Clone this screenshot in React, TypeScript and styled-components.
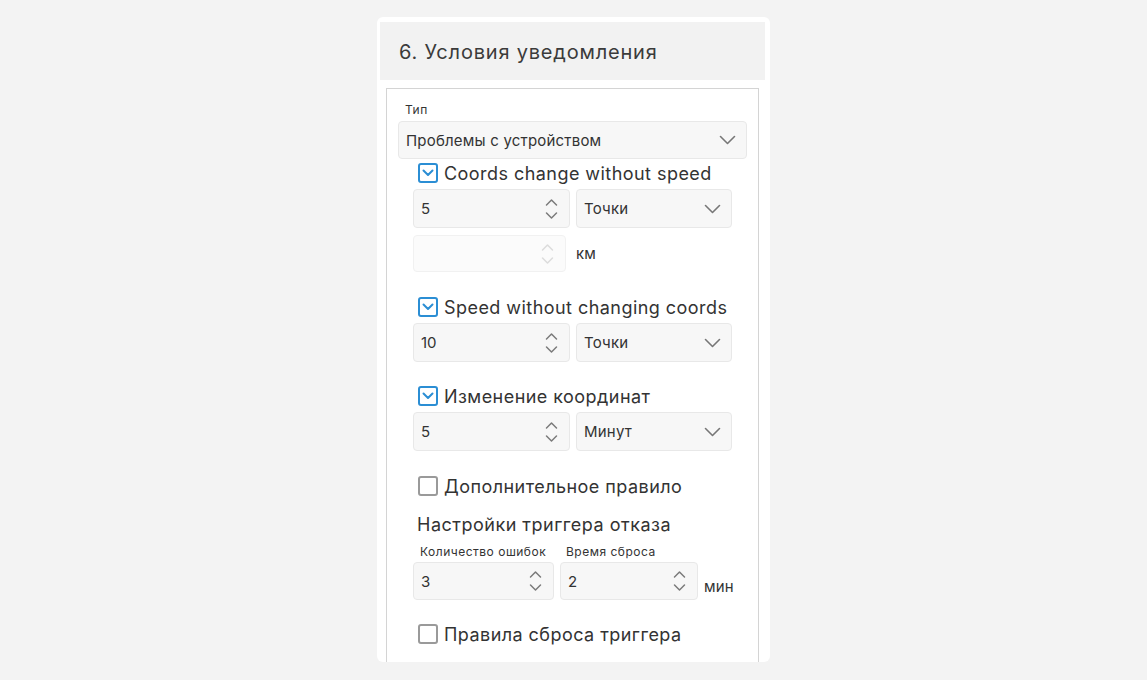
import React from "react";
import styled, { createGlobalStyle } from "styled-components";

const Global = createGlobalStyle`
  html, body { margin: 0; padding: 0; background: #f3f3f3; }
  body { font-family: Inter, "Noto Sans", sans-serif; color: #333; }
  * { box-sizing: border-box; }
`;

const Page = styled.div`
  width: 1147px;
  height: 680px;
  display: flex;
  justify-content: center;
  padding-top: 17px;
`;

const Card = styled.div`
  width: 393px;
  height: 645px;
  background: #fff;
  border-radius: 6px;
  overflow: hidden;
  padding: 5px 5px 0 3px;
`;

const Header = styled.div`
  height: 58px;
  background: #f2f2f2;
  display: flex;
  align-items: center;
  padding-left: 19px;
  padding-top: 2px;
  font-size: 20px;
  color: #3b3b3b;
  letter-spacing: 0.8px;
`;

const Box = styled.div`
  margin: 8px 6px 0 6px;
  border: 1px solid #d4d4d4;
  border-bottom: none;
  padding: 12px 11px 40px 11px;
  height: 600px;
`;

const SmallLabel = styled.div<{ $indent?: number; $w?: number }>`
  font-size: 12px;
  line-height: 18px;
  color: #333;
  letter-spacing: 0.5px;
  padding-left: ${(p) => p.$indent ?? 0}px;
  width: ${(p) => (p.$w ? `${p.$w}px` : "auto")};
`;

const SelectBox = styled.div<{ $w?: number }>`
  height: ${(p) => (p.$w ? 39 : 38)}px;
  width: ${(p) => (p.$w ? `${p.$w}px` : "100%")};
  background: #f7f7f7;
  border: 1px solid #e8e8e8;
  border-radius: 4px;
  display: flex;
  align-items: center;
  justify-content: space-between;
  padding: 0 10px 0 7px;
  font-size: 15px;
  letter-spacing: 0.2px;
  color: #333;
`;

const Group = styled.div<{ $mb?: number }>`
  padding-left: 15px;
  margin-bottom: ${(p) => p.$mb ?? 22}px;
`;

const CheckRow = styled.div`
  display: flex;
  align-items: center;
  height: 24px;
  padding-left: 5px;
  gap: 6px;
  font-size: 18px;
  color: #333;
  letter-spacing: 0.45px;
`;

const Box20 = styled.span<{ $on?: boolean }>`
  width: 20px;
  height: 20px;
  border: 2px solid ${(p) => (p.$on ? "#2b8ed4" : "#9a9a9a")};
  border-radius: 3px;
  display: flex;
  align-items: center;
  justify-content: center;
  flex-shrink: 0;
`;

const Row = styled.div<{ $gap?: number; $mt?: number }>`
  display: flex;
  align-items: center;
  gap: ${(p) => p.$gap ?? 6}px;
  margin-top: ${(p) => p.$mt ?? 0}px;
`;

const NumInput = styled.div<{ $w: number; $disabled?: boolean; $h?: number }>`
  width: ${(p) => p.$w}px;
  height: ${(p) => p.$h ?? 39}px;
  background: ${(p) => (p.$disabled ? "#fbfbfb" : "#f7f7f7")};
  border: 1px solid ${(p) => (p.$disabled ? "#f1f1f1" : "#e8e8e8")};
  border-radius: 4px;
  display: flex;
  align-items: center;
  justify-content: space-between;
  padding: 0 11px 0 7px;
  font-size: 15px;
  color: #333;
`;

const Unit = styled.span<{ $mt?: number }>`
  font-size: 15px;
  letter-spacing: 0.2px;
  color: #333;
  margin-top: ${(p) => p.$mt ?? 0}px;
`;

const Heading = styled.div`
  font-size: 18px;
  line-height: 22px;
  color: #333;
  padding-left: 19px;
  letter-spacing: 0.5px;
`;

const LabelRow = styled.div`
  display: flex;
  margin-top: 7px;
  padding-left: 22px;
  height: 18px;
  align-items: center;
`;

const Chevron = () => (
  <svg width="17" height="10" viewBox="0 0 17 10" fill="none">
    <path d="M1.5 1.5 L8.5 8.5 L15.5 1.5" stroke="#777" strokeWidth="1.6" strokeLinecap="round" strokeLinejoin="round" />
  </svg>
);

const Spinner = ({ light }: { light?: boolean }) => (
  <svg width="13" height="22" viewBox="0 0 13 22" fill="none">
    <path d="M1.5 7 L6.5 2 L11.5 7" stroke={light ? "#dcdcdc" : "#7a7a7a"} strokeWidth="1.5" strokeLinecap="round" strokeLinejoin="round" />
    <path d="M1.5 15 L6.5 20 L11.5 15" stroke={light ? "#dcdcdc" : "#7a7a7a"} strokeWidth="1.5" strokeLinecap="round" strokeLinejoin="round" />
  </svg>
);

const Check = ({ on, label }: { on?: boolean; label: string }) => (
  <CheckRow>
    <Box20 $on={on}>
      {on && (
        <svg width="12" height="8" viewBox="0 0 12 8" fill="none">
          <path d="M1.5 1.5 L6 6 L10.5 1.5" stroke="#2b8ed4" strokeWidth="2" strokeLinecap="round" strokeLinejoin="round" />
        </svg>
      )}
    </Box20>
    <span>{label}</span>
  </CheckRow>
);

const Num = ({ w, v, disabled, h }: { w: number; v?: string; disabled?: boolean; h?: number }) => (
  <NumInput $w={w} $disabled={disabled} $h={h}>
    <span>{v}</span>
    <Spinner light={disabled} />
  </NumInput>
);

const Sel = ({ w, v }: { w?: number; v: string }) => (
  <SelectBox $w={w}>
    <span>{v}</span>
    <Chevron />
  </SelectBox>
);

const Spacer = styled.div<{ $h: number }>`
  height: ${(p) => p.$h}px;
`;

export default function App() {
  return (
    <>
      <Global />
      <Page>
        <Card>
          <Header>6. Условия уведомления</Header>
          <Box>
            <SmallLabel $indent={7}>Тип</SmallLabel>
            <Spacer $h={2} />
            <Sel v="Проблемы с устройством" />
            <Group $mb={23}>
              <Spacer $h={2} />
              <Check on label="Coords change without speed" />
              <Row $mt={4}>
                <Num w={157} v="5" />
                <Sel w={156} v="Точки" />
              </Row>
              <Row $mt={7} $gap={10}>
                <Num w={153} disabled h={37} />
                <Unit>км</Unit>
              </Row>
            </Group>
            <Group>
              <Check on label="Speed without changing coords" />
              <Row $mt={4}>
                <Num w={157} v="10" />
                <Sel w={156} v="Точки" />
              </Row>
            </Group>
            <Group $mb={23}>
              <Check on label="Изменение координат" />
              <Row $mt={4}>
                <Num w={157} v="5" />
                <Sel w={156} v="Минут" />
              </Row>
            </Group>
            <Group $mb={16}>
              <Check label="Дополнительное правило" />
            </Group>
            <Heading>Настройки триггера отказа</Heading>
            <LabelRow>
              <SmallLabel $w={146}>Количество ошибок</SmallLabel>
              <SmallLabel>Время сброса</SmallLabel>
            </LabelRow>
            <Group $mb={22}>
              <Row $mt={1}>
                <Num w={141} v="3" h={38} />
                <Num w={138} v="2" h={38} />
                <Unit $mt={10}>мин</Unit>
              </Row>
            </Group>
            <Group>
              <Check label="Правила сброса триггера" />
            </Group>
          </Box>
        </Card>
      </Page>
    </>
  );
}
